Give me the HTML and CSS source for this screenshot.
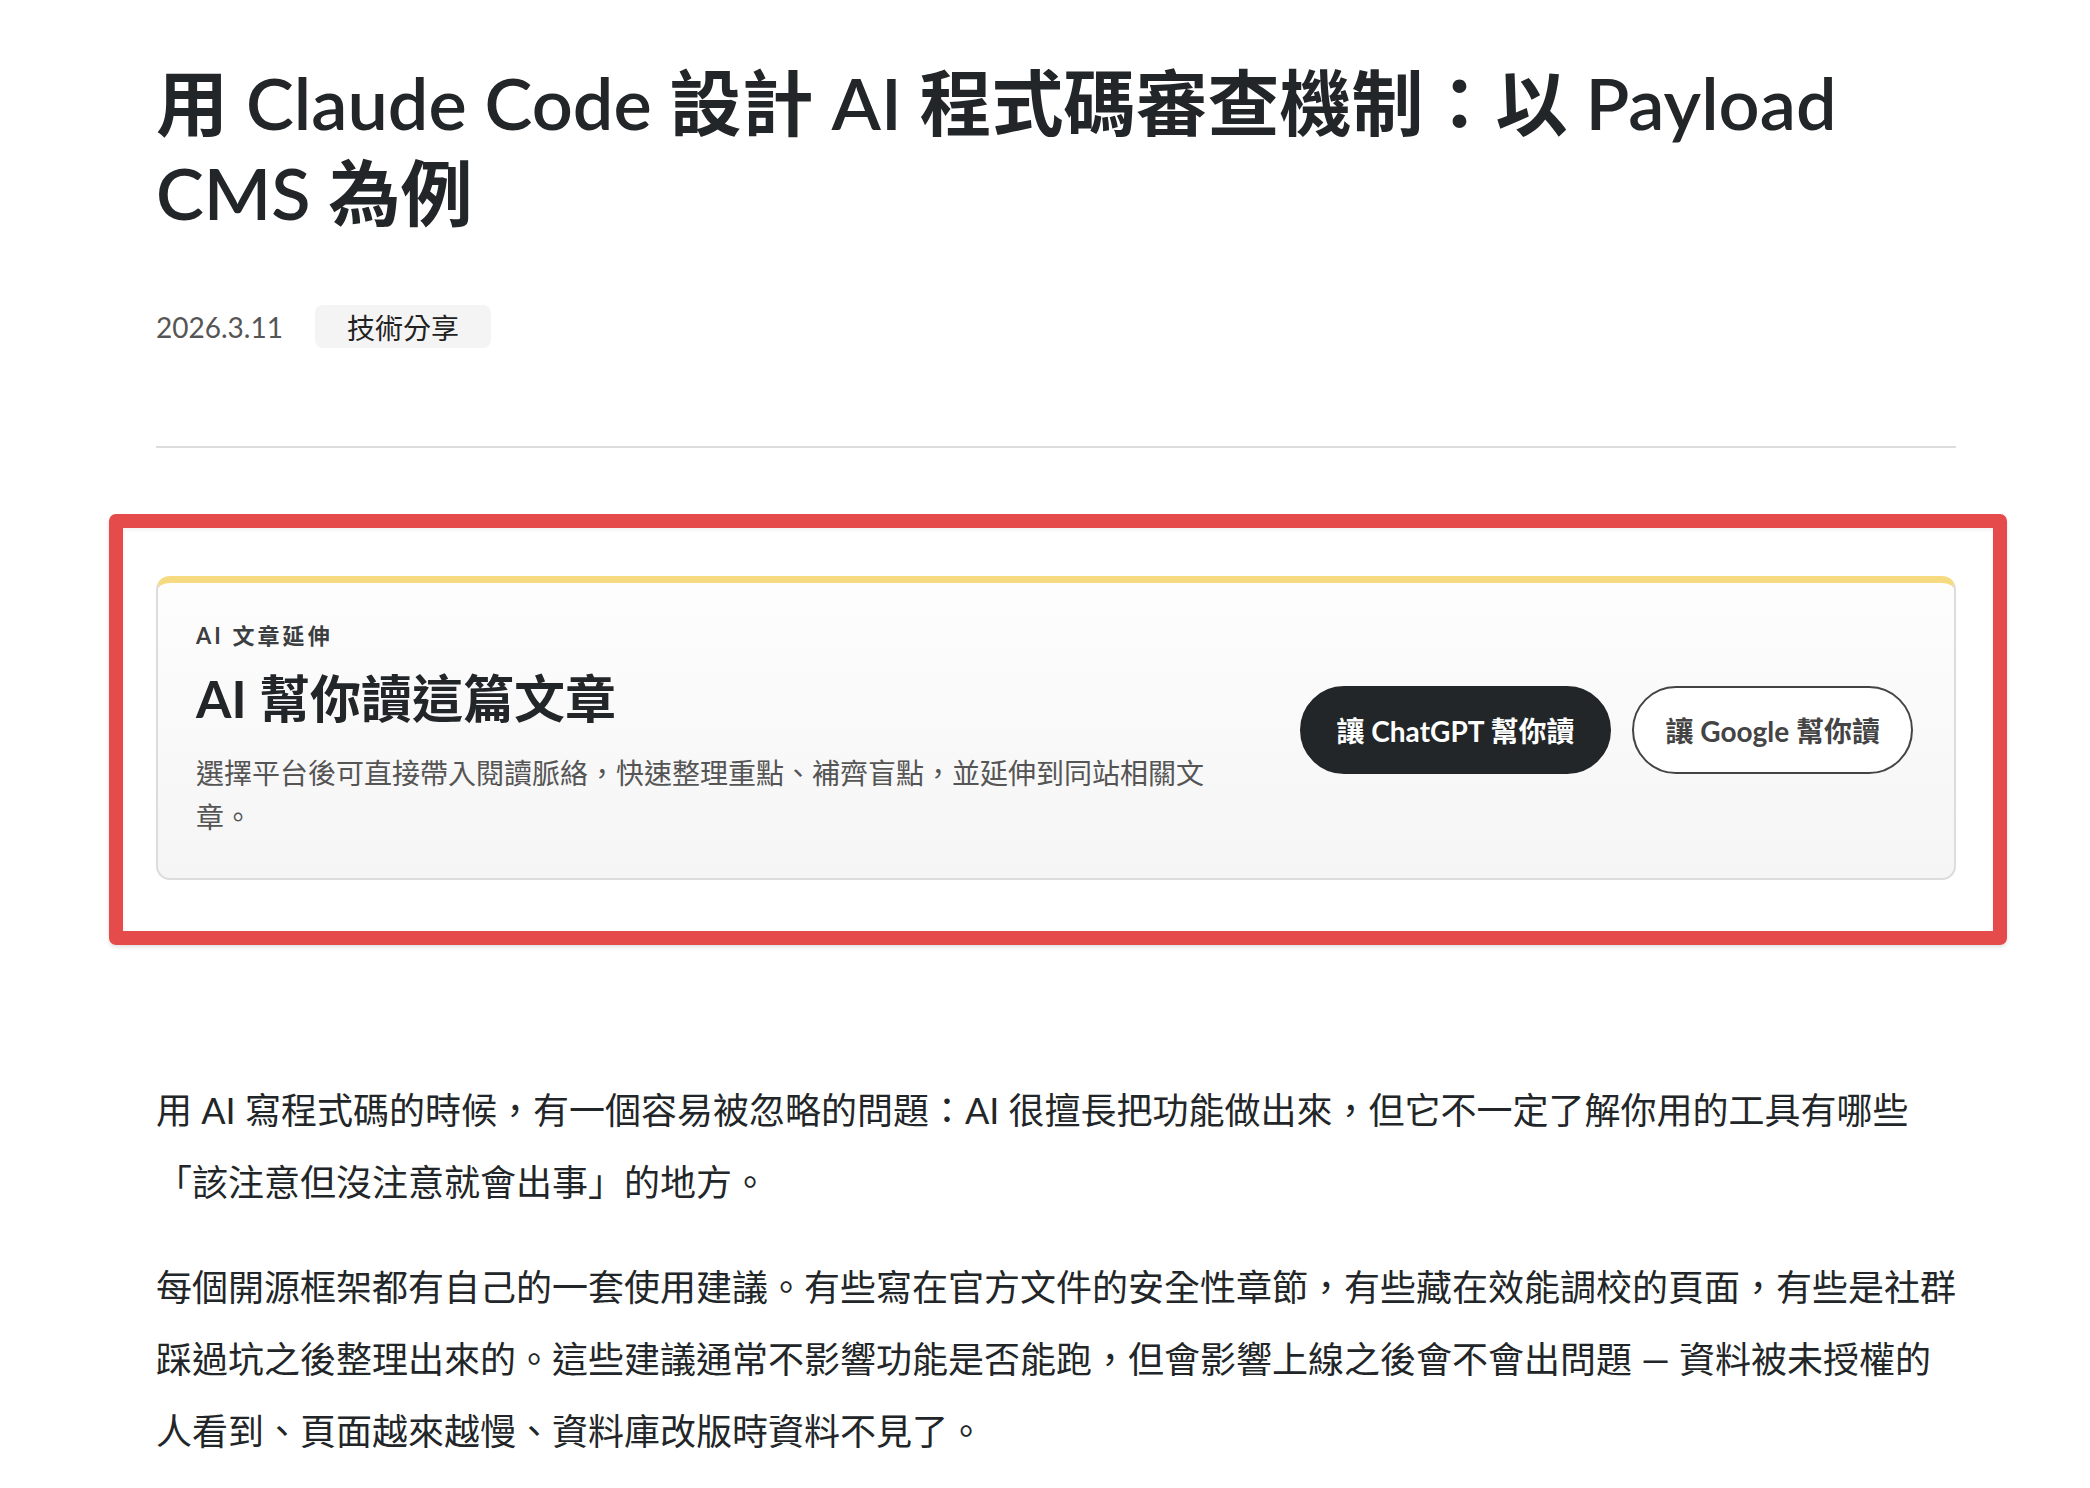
FILE: index.html
```html
<!DOCTYPE html>
<html lang="zh-Hant">
<head>
  <meta charset="UTF-8">
  <meta name="viewport" content="width=device-width, initial-scale=1.0">
  <title>用 Claude Code 設計 AI 程式碼審查機制</title>
  <link rel="stylesheet" href="styles.css">
</head>
<body>
  <main class="article">
    <h1 class="article-title">用 Claude Code 設計 AI 程式碼審查機制：以 Payload CMS 為例</h1>

    <div class="meta">
      <span class="date">2026.3.11</span>
      <span class="tag">技術分享</span>
    </div>

    <hr class="divider">

    <div class="highlight">
      <section class="ai-card">
        <div class="ai-card-text">
          <div class="eyebrow">AI 文章延伸</div>
          <h2>AI 幫你讀這篇文章</h2>
          <p>選擇平台後可直接帶入閱讀脈絡，快速整理重點、補齊盲點，並延伸到同站相關文章。</p>
        </div>
        <div class="ai-card-actions">
          <a class="btn btn-dark" href="#">讓 ChatGPT 幫你讀</a>
          <a class="btn btn-outline" href="#">讓 Google 幫你讀</a>
        </div>
      </section>
    </div>

    <div class="content">
      <p>用 AI 寫程式碼的時候，有一個容易被忽略的問題：AI 很擅長把功能做出來，但它不一定了解你用的工具有哪些「該注意但沒注意就會出事」的地方。</p>
      <p>每個開源框架都有自己的一套使用建議。有些寫在官方文件的安全性章節，有些藏在效能調校的頁面，有些是社群踩過坑之後整理出來的。這些建議通常不影響功能是否能跑，但會影響上線之後會不會出問題 — 資料被未授權的人看到、頁面越來越慢、資料庫改版時資料不見了。</p>
    </div>
  </main>
</body>
</html>
```

FILE: styles.css
```css
* {
  box-sizing: border-box;
}
body {
  margin: 0;
  background: #fff;
  color: #222628;
  font-family: "Lato", "Noto Sans CJK TC", sans-serif;
}
.article {
  width: 1800px;
  margin-left: 156px;
}
.article-title {
  margin: 57px 0 0;
  font-size: 72px;
  line-height: 90px;
  font-weight: 600;
}
.meta {
  display: flex;
  align-items: center;
  gap: 32px;
  margin-top: 68px;
}
.date {
  font-size: 28px;
  color: #555;
}
.tag {
  display: inline-flex;
  align-items: center;
  height: 43px;
  padding: 0 32px;
  background: #f4f4f4;
  border-radius: 8px;
  font-size: 28px;
  color: #222;
}
.divider {
  border: none;
  height: 2px;
  background: #dcdcdc;
  margin: 98px 0 0;
}

/* red highlight frame */
.highlight {
  margin: 66px -51px 0 -47px;
  border: 14px solid #e54b4a;
  border-radius: 7px;
  padding: 48px 37px 51px 33px;
  box-shadow: 0 2px 4px rgba(0,0,0,0.12), inset 0 2px 4px rgba(0,0,0,0.06);
}
.ai-card {
  display: flex;
  align-items: center;
  justify-content: space-between;
  border: 2px solid #dcdcdc;
  border-top: 7px solid #f5da80;
  border-radius: 14px;
  background: linear-gradient(#fdfdfd, #f5f5f5);
  padding: 37px 41px 39px 38px;
}
.ai-card-text {
  flex: 1;
}
.eyebrow {
  font-size: 22px;
  line-height: 31px;
  font-weight: 700;
  letter-spacing: 0.14em;
  color: #3c3f41;
}
.ai-card h2 {
  margin: 15px 0 0;
  font-size: 51px;
  line-height: 65px;
  font-weight: 700;
  color: #222628;
}
.ai-card p {
  margin: 20px 0 0;
  max-width: 1020px;
  font-size: 28px;
  line-height: 44px;
  color: #555;
}
.ai-card-actions {
  display: flex;
  gap: 21px;
  flex-shrink: 0;
}
.btn {
  display: inline-flex;
  align-items: center;
  height: 88px;
  padding: 0 35px;
  border: 2px solid #222628;
  border-radius: 999px;
  font-size: 28px;
  font-weight: 700;
  text-decoration: none;
  white-space: nowrap;
}
.btn-dark {
  background: #222628;
  color: #fff;
}
.btn-outline {
  padding: 0 31px;
  background: #fff;
  border-color: #444;
  color: #444;
}

.content {
  margin-top: 129px;
}
.content p {
  margin: 0 0 33px;
  font-size: 36px;
  line-height: 72px;
  color: #222628;
}
```
